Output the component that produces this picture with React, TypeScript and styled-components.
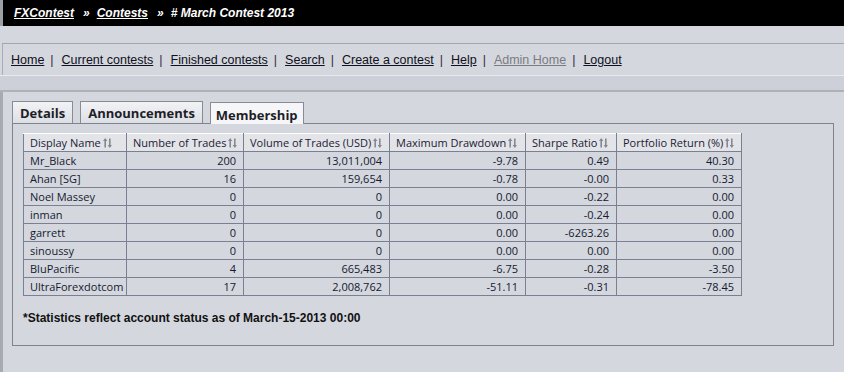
import styled, { createGlobalStyle } from 'styled-components'

interface Row {
    name: string
    trades: string
    volume: string
    drawdown: string
    sharpe: string
    ret: string
}

const rows: Row[] = [
    { name: 'Mr_Black', trades: '200', volume: '13,011,004', drawdown: '-9.78', sharpe: '0.49', ret: '40.30' },
    { name: 'Ahan [SG]', trades: '16', volume: '159,654', drawdown: '-0.78', sharpe: '-0.00', ret: '0.33' },
    { name: 'Noel Massey', trades: '0', volume: '0', drawdown: '0.00', sharpe: '-0.22', ret: '0.00' },
    { name: 'inman', trades: '0', volume: '0', drawdown: '0.00', sharpe: '-0.24', ret: '0.00' },
    { name: 'garrett', trades: '0', volume: '0', drawdown: '0.00', sharpe: '-6263.26', ret: '0.00' },
    { name: 'sinoussy', trades: '0', volume: '0', drawdown: '0.00', sharpe: '0.00', ret: '0.00' },
    { name: 'BluPacific', trades: '4', volume: '665,483', drawdown: '-6.75', sharpe: '-0.28', ret: '-3.50' },
    { name: 'UltraForexdotcom', trades: '17', volume: '2,008,762', drawdown: '-51.11', sharpe: '-0.31', ret: '-78.45' },
]

const columns = [
    { title: 'Display Name', width: 103 },
    { title: 'Number of Trades', width: 117 },
    { title: 'Volume of Trades (USD)', width: 146 },
    { title: 'Maximum Drawdown', width: 136 },
    { title: 'Sharpe Ratio', width: 91 },
    { title: 'Portfolio Return (%)', width: 125 },
]

const navLinks = ['Home', 'Current contests', 'Finished contests', 'Search', 'Create a contest', 'Help', 'Admin Home', 'Logout']

function SortIcon() {
    return (
        <SortSvg width="9" height="10" viewBox="0 0 9 10">
            <path d="M2.2 0 L4.4 3 L3 3 L3 9.5 L1.4 9.5 L1.4 3 L0 3 Z" fill="#868991" />
            <path d="M6.8 10 L9 7 L7.6 7 L7.6 0.5 L6 0.5 L6 7 L4.6 7 Z" fill="#868991" />
        </SortSvg>
    )
}

export default function App() {
    return (
        <>
            <GlobalStyle />
            <Page>
                <TopBar>
                    <Crumb href="#">FXContest</Crumb>
                    <Raquo>»</Raquo>
                    <Crumb href="#">Contests</Crumb>
                    <Raquo>»</Raquo>
                    <CrumbText># March Contest 2013</CrumbText>
                </TopBar>
                <NavBox>
                    {navLinks.map((l, i) => (
                        <NavItem key={l}>
                            <NavLink href="#" muted={l === 'Admin Home'}>{l}</NavLink>
                            {i < navLinks.length - 1 && <Pipe>|</Pipe>}
                        </NavItem>
                    ))}
                </NavBox>
                <NavShadow />
                <Content>
                    <Tabs>
                        <Tab>Details</Tab>
                        <Tab>Announcements</Tab>
                        <Tab active>Membership</Tab>
                    </Tabs>
                    <Panel>
                        <Table>
                            <colgroup>
                                {columns.map(c => <col key={c.title} style={{ width: c.width }} />)}
                            </colgroup>
                            <thead>
                                <tr>
                                    {columns.map(c => (
                                        <Th key={c.title}>{c.title}<SortIcon /></Th>
                                    ))}
                                </tr>
                            </thead>
                            <tbody>
                                {rows.map(r => (
                                    <tr key={r.name}>
                                        <Td>{r.name}</Td>
                                        <Td num>{r.trades}</Td>
                                        <Td num>{r.volume}</Td>
                                        <Td num>{r.drawdown}</Td>
                                        <Td num>{r.sharpe}</Td>
                                        <Td num>{r.ret}</Td>
                                    </tr>
                                ))}
                            </tbody>
                        </Table>
                        <Note>*Statistics reflect account status as of March-15-2013 00:00</Note>
                    </Panel>
                </Content>
            </Page>
        </>
    )
}

const GlobalStyle = createGlobalStyle`
    html, body {
        margin: 0;
        background: #d4d7de;
    }
`

const Page = styled.div`
    width: 844px;
    height: 372px;
    display: flex;
    flex-direction: column;
    font-family: "Liberation Sans", Arial, sans-serif;
    overflow: hidden;
`

const TopBar = styled.div`
    height: 26px;
    background: #000;
    border-left: 3px solid #9c9fa6;
    display: flex;
    align-items: center;
    padding-left: 11px;
    font-size: 12px;
    font-weight: bold;
    font-style: italic;
    color: #fff;
    box-sizing: border-box;
`

const Crumb = styled.a`
    color: #fff;
    text-decoration: underline;
`

const CrumbText = styled.span`
    color: #fff;
`

const Raquo = styled.span`
    margin: 0 7px 0 9px;
`

const NavBox = styled.div`
    margin-top: 17px;
    height: 32px;
    box-sizing: border-box;
    border-top: 1px solid #a2a5ac;
    border-left: 1px solid #a9acb3;
    margin-left: 2px;
    padding-left: 8px;
    display: flex;
    align-items: center;
    font-size: 12.5px;
    padding-top: 1px;
`

const NavItem = styled.span`
    display: flex;
    align-items: center;
`

const NavLink = styled.a<{ muted?: boolean }>`
    color: ${({ muted }) => muted ? '#7a7c82' : '#101020'};
    text-decoration: underline;
`

const Pipe = styled.span`
    color: #3a2a40;
    margin: 0 8px 0 6px;
`

const NavShadow = styled.div`
    height: 17px;
    box-sizing: border-box;
    border-top: 1px solid #e8eaee;
    border-bottom: 2px solid #aeb1b8;
    background: #cdd0d8;
`

const Content = styled.div`
    flex: 1;
    border-left: 3px solid #a7aab1;
    padding: 9px 0 0 9px;
`

const Tabs = styled.div`
    display: flex;
    align-items: flex-end;
    gap: 7px;
    height: 22px;
    position: relative;
    z-index: 1;
`

const Tab = styled.div<{ active?: boolean }>`
    height: 22px;
    margin-bottom: ${({ active }) => active ? '-1px' : '0'};
    box-sizing: border-box;
    border: 1px solid #878b95;
    border-bottom: none;
    padding: 0 ${({ active }) => active ? '5px' : '7px'};
    display: flex;
    align-items: center;
    font-family: "Open Sans", "Noto Sans", sans-serif;
    font-weight: bold;
    font-size: 13px;
    color: #1e1e28;
    background: ${({ active }) => active
        ? '#f6f6f8'
        : 'linear-gradient(#f2f3f5, #dcdfe4)'};
    padding-top: ${({ active }) => active ? '3px' : '0'};
`

const Panel = styled.div`
    width: 822px;
    height: 223px;
    box-sizing: border-box;
    border: 1px solid #80838c;
    padding: 9px 10px;
`

const Table = styled.table`
    border-collapse: collapse;
    table-layout: fixed;
    width: 718px;
    font-family: "Open Sans", "Noto Sans", sans-serif;
    font-size: 11px;
    color: #141a30;
`

const Th = styled.th`
    height: 18px;
    padding: 0 0 0 6px;
    border: 1px solid #7a7f92;
    border-top-color: #ffffff;
    background: #e2e4e8;
    text-align: left;
    font-weight: normal;
    white-space: nowrap;
    color: #1c2035;
    box-sizing: border-box;
`

const SortSvg = styled.svg`
    margin-left: 2px;
    vertical-align: -1px;
`

const Td = styled.td<{ num?: boolean }>`
    height: 18px;
    padding: ${({ num }) => num ? '0 7px 0 0' : '0 0 0 6px'};
    border: 1px solid #7a7f92;
    text-align: ${({ num }) => num ? 'right' : 'left'};
    white-space: nowrap;
    box-sizing: border-box;
`

const Note = styled.div`
    margin-top: 14px;
    font-size: 12px;
    font-weight: bold;
    color: #111;
    line-height: 16px;
`
